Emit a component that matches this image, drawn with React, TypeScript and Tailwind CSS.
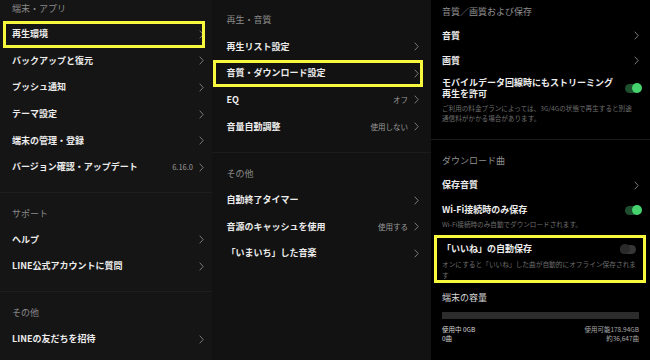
import React from "react";

const Chevron = () => (
  <svg width="5" height="9" viewBox="0 0 5 9" className="shrink-0">
    <path d="M0.7 0.7 L4.2 4.5 L0.7 8.3" fill="none" stroke="#7a7a7a" strokeWidth="1" />
  </svg>
);

const Toggle = ({ on }: { on: boolean }) =>
  on ? (
    <div className="relative w-[16px] h-[9px] rounded-full bg-[#1d4f2e] shrink-0">
      <div className="absolute right-[-1px] top-[-0.5px] w-[10px] h-[10px] rounded-full bg-[#46d36e]" />
    </div>
  ) : (
    <div className="relative w-[16px] h-[9px] rounded-full bg-[#363636] shrink-0">
      <div className="absolute left-[-0.5px] top-[-0.5px] w-[10px] h-[10px] rounded-full bg-[#2a2a2a]" />
    </div>
  );

const Header = ({ children, pl }: { children: React.ReactNode; pl: string }) => (
  <div className={`h-[34px] pt-[15.5px] ${pl} text-[9px] leading-[12px] text-[#8a8a8a] whitespace-nowrap`}>
    {children}
  </div>
);

type RowProps = {
  label: string;
  value?: string;
  box?: string;
  pad: string;
};

const Row = ({ label, value, box, pad }: RowProps) => (
  <div className={`relative h-[26.6px] flex items-center justify-between ${pad}`}>
    <span className="text-[9px] leading-[12px] font-bold text-[#ececec] whitespace-nowrap">{label}</span>
    <span className="flex items-center gap-[6px]">
      {value && <span className="text-[7.5px] leading-[10px] text-[#9a9a9a] whitespace-nowrap">{value}</span>}
      <Chevron />
    </span>
    {box && <div className={`absolute top-0 bottom-0 border-[3px] border-[#f8f83c] pointer-events-none ${box}`} />}
  </div>
);

export default function App() {
  const lp = "pl-[12px] pr-[8px]";
  const mp = "pl-[14.5px] pr-[12px]";
  return (
    <div className="w-[650px] h-[360px] flex overflow-hidden font-['Noto_Sans_CJK_JP','Noto_Sans',sans-serif] bg-black">
      {/* Left panel */}
      <div className="w-[212px] shrink-0 bg-[#151515] overflow-hidden">
        <div className="-mt-[13px]">
          <Header pl="pl-[12px]">端末・アプリ</Header>
          <Row pad={lp} label="再生環境" box="left-[3px] right-[7px]" />
          <Row pad={lp} label="バックアップと復元" />
          <Row pad={lp} label="プッシュ通知" />
          <Row pad={lp} label="テーマ設定" />
          <Row pad={lp} label="端末の管理・登録" />
          <Row pad={lp} label="バージョン確認・アップデート" value="6.16.0" />
          <div className="mt-[11px] border-t border-[#1e1e1e]">
            <Header pl="pl-[12px]">サポート</Header>
            <Row pad={lp} label="ヘルプ" />
            <Row pad={lp} label="LINE公式アカウントに質問" />
          </div>
          <div className="mt-[11px] border-t border-[#1e1e1e]">
            <Header pl="pl-[12px]">その他</Header>
            <Row pad={lp} label="LINEの友だちを招待" />
          </div>
        </div>
      </div>

      {/* Middle panel */}
      <div className="w-[219px] shrink-0 bg-[#121212] overflow-hidden">
        <div className="h-[33.5px] pt-[14px] pl-[14.5px] text-[9px] leading-[12px] text-[#8a8a8a]">再生・音質</div>
        <Row pad={mp} label="再生リスト設定" />
        <Row pad={mp} label="音質・ダウンロード設定" box="left-[1px] right-[8px]" />
        <Row pad={mp} label="EQ" value="オフ" />
        <Row pad={mp} label="音量自動調整" value="使用しない" />
        <div className="mt-[12px] border-t border-[#1c1c1c]">
          <Header pl="pl-[14.5px]">その他</Header>
          <Row pad={mp} label="自動終了タイマー" />
          <Row pad={mp} label="音源のキャッシュを使用" value="使用する" />
          <Row pad={mp} label="「いまいち」した音楽" />
        </div>
      </div>

      {/* Right panel */}
      <div className="flex-1 bg-black overflow-hidden">
        <div className="pl-[11px] pr-[11px]">
          <div className="h-[23.4px] flex items-center text-[9px] text-[#8f8f8f]">音質／画質および保存</div>
          <div className="h-[24.7px] flex items-center justify-between">
            <span className="text-[9px] font-bold text-[#ececec]">音質</span>
            <Chevron />
          </div>
          <div className="h-[24.7px] flex items-center justify-between">
            <span className="text-[9px] font-bold text-[#ececec]">画質</span>
            <Chevron />
          </div>
          <div className="pt-[4px] flex items-center justify-between">
            <span className="text-[9px] leading-[11.6px] font-bold text-[#ececec] whitespace-nowrap">
              モバイルデータ回線時にもストリーミング
              <br />
              再生を許可
            </span>
            <span className="mr-[-2px]">
              <Toggle on />
            </span>
          </div>
          <div className="mt-[4.3px] text-[6.6px] leading-[9.3px] text-[#6e6e6e] whitespace-nowrap">
            ご利用の料金プランによっては、3G/4Gの状態で再生すると別途
            <br />
            通信料がかかる場合があります。
          </div>
        </div>
        <div className="mt-[16px] border-t border-[#1a1a1a] pl-[11px] pr-[11px]">
          <div className="h-[33px] pt-[15px] text-[9px] leading-[12px] text-[#8f8f8f]">ダウンロード曲</div>
          <div className="h-[24.7px] flex items-center justify-between">
            <span className="text-[9px] font-bold text-[#ececec]">保存音質</span>
            <Chevron />
          </div>
          <div className="pt-[6.8px] flex items-center justify-between">
            <span className="text-[9px] leading-[11.6px] font-bold text-[#ececec]">Wi-Fi接続時のみ保存</span>
            <span className="mr-[-2px]">
              <Toggle on />
            </span>
          </div>
          <div className="mt-[4.5px] text-[6.6px] leading-[9.3px] text-[#6e6e6e] whitespace-nowrap">
            Wi-Fi接続時のみ自動でダウンロードされます。
          </div>
          <div className="relative mt-[5px] h-[48px] pt-[8.5px]">
            <div className="absolute inset-y-0 left-[-8px] right-[-7px] border-[3px] border-[#f8f83c]" />
            <div className="flex items-center justify-between">
              <span className="text-[9px] leading-[11.6px] font-bold text-[#ececec]">「いいね」の自動保存</span>
              <span className="mr-[3px]">
                <Toggle on={false} />
              </span>
            </div>
            <div className="mt-[4.6px] text-[6.7px] leading-[10.7px] text-[#6e6e6e] whitespace-nowrap">
              オンにすると「いいね」した曲が自動的にオフライン保存されま
              <br />す
            </div>
          </div>
          <div className="mt-[9.3px] text-[9px] leading-[12px] text-[#d4d4d4]">端末の容量</div>
          <div className="mt-[8.4px] h-[6.6px] bg-[#2c2c2c]" />
          <div className="mt-[5.5px] flex justify-between text-[6.5px] leading-[9.5px]">
            <div className="text-[#d8d8d8]">
              <div>使用中 0GB</div>
              <div>0曲</div>
            </div>
            <div className="text-right text-[#a8a8a8]">
              <div>使用可能178.94GB</div>
              <div>約36,647曲</div>
            </div>
          </div>
        </div>
      </div>
    </div>
  );
}
